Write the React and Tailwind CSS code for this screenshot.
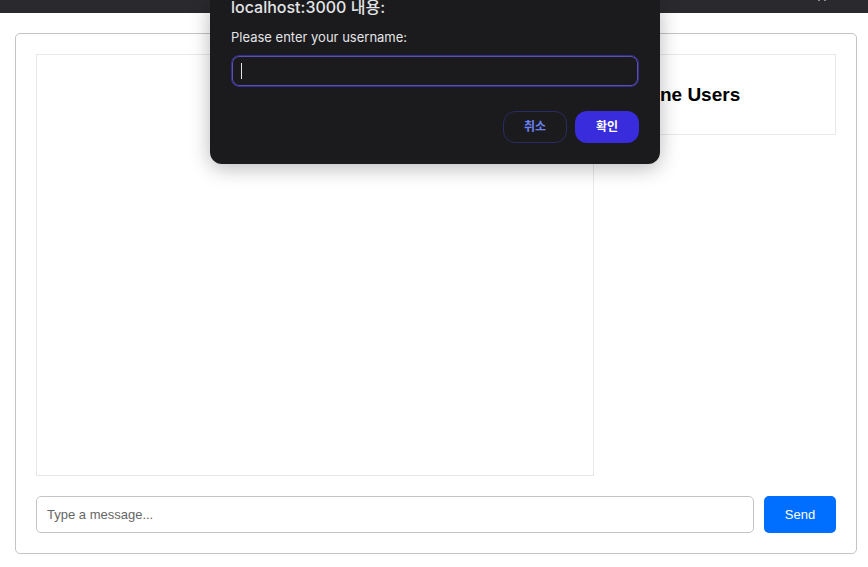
import React from "react";

function BrowserBar() {
  return (
    <div className="flex h-[13px] justify-end bg-[#2a292e] pr-[42px]">
      <svg width="8" height="2" viewBox="0 0 8 2" aria-hidden="true">
        <path d="M0 0h2v1H0zM6 0h2v1H6z" fill="#8d8c91" />
      </svg>
    </div>
  );
}

function UsernamePrompt() {
  return (
    <div className="pointer-events-none absolute inset-x-0 top-0 flex justify-center pl-0.5">
      <form
        role="dialog"
        aria-labelledby="prompt-title"
        onSubmit={(e) => e.preventDefault()}
        className="pointer-events-auto w-[450px] rounded-b-xl bg-[#1b1b1d] px-[21px] pb-[21px] font-['Inter','Noto_Sans_CJK_KR',sans-serif] text-[#e4e4e7] shadow-[0_4px_20px_rgba(0,0,0,0.28)]"
      >
        <h2 id="prompt-title" className="-mt-1 h-[22px] text-base leading-[22px] font-medium">
          localhost:3000 내용:
        </h2>
        <label htmlFor="username" className="mt-[9px] block text-[13px] leading-5">
          Please enter your username:
        </label>
        <div className="relative mt-2">
          <input
            id="username"
            type="text"
            className="block h-8 w-full rounded-lg border border-[#332c92] bg-transparent px-2 text-[13px] inset-ring inset-ring-[#5a51ac] outline-none"
          />
          <span className="absolute top-2 left-[10px] h-4 w-px bg-[#e4e4e7]" />
        </div>
        <div className="mt-6 flex justify-end gap-2 text-xs font-bold">
          <button type="button" className="h-8 w-16 rounded-xl border border-[#2b2a66] text-[#6b82f5]">
            취소
          </button>
          <button type="submit" className="h-8 w-16 rounded-xl bg-[#382cdd] text-white">
            확인
          </button>
        </div>
      </form>
    </div>
  );
}

export default function App() {
  return (
    <div className="relative min-h-screen bg-white font-['Liberation_Sans',Arial,sans-serif] text-black">
      <BrowserBar />
      <main className="mt-5 mr-[11px] ml-[15px] rounded-[5px] border border-[#c4c4c4] p-5">
        <div className="flex items-start gap-5">
          <section aria-label="Messages" className="h-[422px] flex-1 border border-[#e8e8e8]" />
          <aside className="w-[222px] border border-[#e8e8e8] px-2 py-7">
            <h3 className="text-[19px] leading-[23px] font-bold">Online Users</h3>
          </aside>
        </div>
        <form className="mt-5 flex gap-[10px]" onSubmit={(e) => e.preventDefault()}>
          <input
            type="text"
            aria-label="Message"
            placeholder="Type a message..."
            className="h-[37px] min-w-0 flex-1 rounded-[5px] border border-[#c4c4c4] px-[10px] text-[13px] placeholder:text-[#666666]"
          />
          <button type="submit" className="h-[37px] w-[72px] rounded-[5px] bg-[#006fff] text-[13px] text-white">
            Send
          </button>
        </form>
      </main>
      <UsernamePrompt />
    </div>
  );
}
